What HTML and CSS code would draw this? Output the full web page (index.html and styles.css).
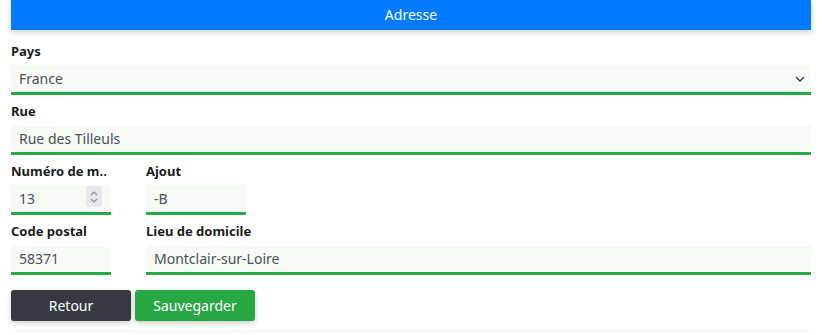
FILE: index.html
```html
<!DOCTYPE html>
<html lang="fr">
  <head>
    <meta charset="UTF-8" />
    <meta name="viewport" content="width=device-width, initial-scale=1.0" />
    <title>Adresse</title>
    <link rel="stylesheet" href="styles.css">
  </head>
  <body>
    <div class="page">
      <div class="header">Adresse</div>
      <form class="address-form">
        <div class="form-group">
          <label for="pays">Pays</label>
          <div class="field-wrap">
            <select id="pays" name="pays">
              <option>France</option>
            </select>
            <svg class="chevron" width="10" height="6" viewBox="0 0 10 6">
              <path d="M1 1 L5 5 L9 1" fill="none" stroke="#343a40" stroke-width="1.4" />
            </svg>
          </div>
        </div>
        <div class="form-group">
          <label for="rue">Rue</label>
          <input type="text" id="rue" name="rue" value="Rue des Tilleuls" />
        </div>
        <div class="form-row">
          <div class="form-group">
            <label for="numero">Numéro de m..</label>
            <div class="field-wrap">
              <input type="number" id="numero" name="numero" value="13" />
              <span class="spinner">
                <svg width="8" height="14" viewBox="0 0 8 14">
                  <path d="M1 5 L4 2 L7 5" fill="none" stroke="#8a8d93" stroke-width="1.2" />
                  <path d="M1 9 L4 12 L7 9" fill="none" stroke="#8a8d93" stroke-width="1.2" />
                </svg>
              </span>
            </div>
          </div>
          <div class="form-group">
            <label for="ajout">Ajout</label>
            <input class="short" type="text" id="ajout" name="ajout" value="-B" />
          </div>
        </div>
        <div class="form-row">
          <div class="form-group">
            <label for="cp">Code postal</label>
            <input type="text" id="cp" name="cp" value="58371" />
          </div>
          <div class="form-group">
            <label for="lieu">Lieu de domicile</label>
            <input type="text" id="lieu" name="lieu" value="Montclair-sur-Loire" />
          </div>
        </div>
        <div class="actions">
          <button class="btn btn-dark" type="button">Retour</button>
          <button class="btn btn-green" type="button">Sauvegarder</button>
        </div>
      </form>
      <div class="footer-line"></div>
    </div>
  </body>
</html>
```

FILE: styles.css
```css
body {
  margin: 0;
  font-family: "Noto Sans", "Open Sans", Arial, sans-serif;
  color: #212529;
  background: #fff;
}

.page {
  padding: 0 11px;
}

.header {
  height: 30px;
  line-height: 30px;
  background-color: #007bff;
  color: #fff;
  text-align: center;
  font-size: 14px;
  box-shadow: 0 2px 6px rgba(0, 0, 0, 0.2);
}

.address-form {
  padding-top: 11px;
}

.form-group {
  margin-bottom: 6px;
}

label {
  display: block;
  font-size: 13px;
  font-weight: bold;
  line-height: 20px;
  margin-bottom: 4px;
  color: #1a1d20;
}

input,
select {
  display: block;
  width: 100%;
  height: 30px;
  box-sizing: border-box;
  padding: 0 8px;
  border: none;
  border-bottom: 3px solid #28a745;
  background-color: #f6fbf6;
  color: #495057;
  font-family: inherit;
  font-size: 14px;
  outline: none;
}

select {
  appearance: none;
  -webkit-appearance: none;
}

input[type="number"] {
  -moz-appearance: textfield;
}

input[type="number"]::-webkit-inner-spin-button,
input[type="number"]::-webkit-outer-spin-button {
  -webkit-appearance: none;
  margin: 0;
}

.field-wrap {
  position: relative;
}

.chevron {
  position: absolute;
  right: 6px;
  top: 11px;
}

.spinner {
  position: absolute;
  right: 9px;
  top: 1px;
  width: 16px;
  height: 21px;
  display: flex;
  align-items: center;
  justify-content: center;
  background-color: #e9e9ed;
  border-radius: 2px;
}

.form-row {
  display: grid;
  grid-template-columns: 100px 1fr;
  column-gap: 35px;
}

input.short {
  width: 100px;
}

.actions {
  display: flex;
  gap: 4px;
  padding-top: 9px;
}

.btn {
  width: 120px;
  height: 31px;
  border: none;
  border-radius: 3px;
  color: #fff;
  font-family: inherit;
  font-size: 14px;
  box-shadow: 0 2px 5px rgba(0, 0, 0, 0.2);
}

.btn-dark {
  background-color: #343a40;
}

.btn-green {
  background-color: #28a745;
}

.footer-line {
  margin-top: 11px;
  height: 3px;
  box-shadow: 0 -1px 3px rgba(0, 0, 0, 0.06);
}
```
